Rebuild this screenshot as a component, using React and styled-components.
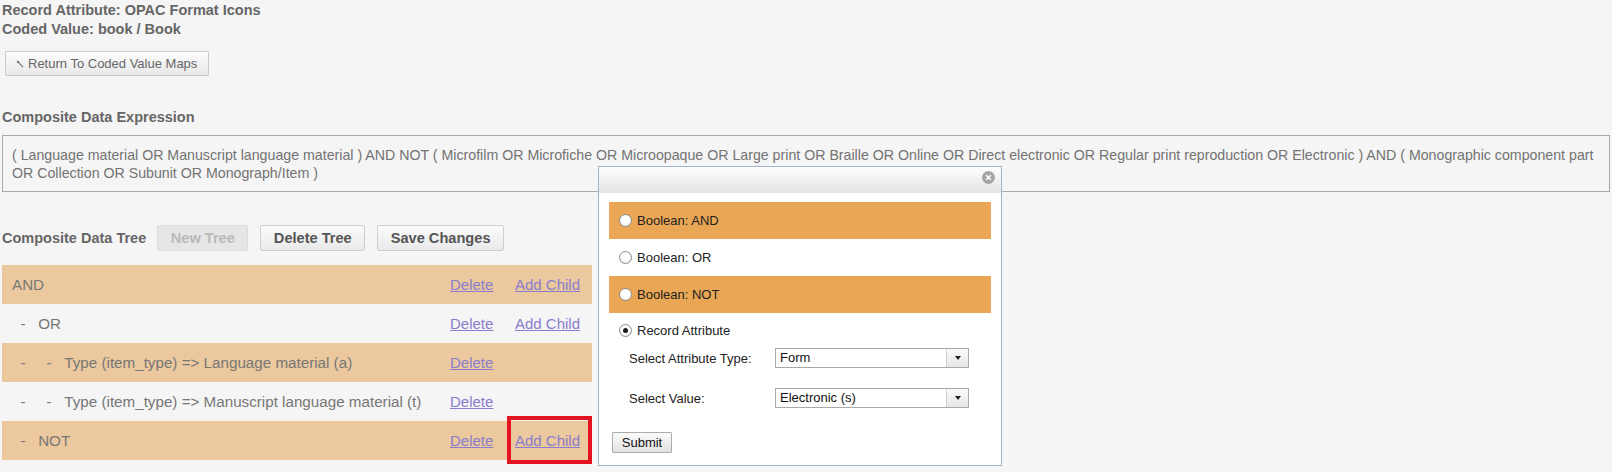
import React from "react";
import styled, { createGlobalStyle } from "styled-components";

const GlobalStyle = createGlobalStyle`
  html, body { margin: 0; padding: 0; background: #f5f5f5; }
  body { font-family: "Liberation Sans", Arial, sans-serif; }
  * { box-sizing: border-box; }
`;

const Page = styled.div`
  position: relative;
  width: 1612px;
  height: 472px;
  padding: 1px 2px 0;
  overflow: hidden;
`;

const Title = styled.div`
  font-weight: bold;
  font-size: 14.5px;
  line-height: 19px;
  color: #666;
`;

const ReturnButton = styled.button`
  display: inline-flex;
  align-items: center;
  gap: 4px;
  margin: 12px 0 0 3px;
  height: 25px;
  padding: 0 11px 0 10px;
  border: 1px solid #cacaca;
  border-radius: 1px;
  background: linear-gradient(#fdfdfd, #e8e8e8);
  color: #666;
  font: 13px "Liberation Sans", Arial, sans-serif;
`;

const SectionTitle = styled(Title)`
  margin-top: 32px;
`;

const ExpressionBox = styled.div`
  margin-top: 8px;
  border: 1px solid #a9a9a9;
  padding: 10px 9px 9px;
  font-size: 14.2px;
  line-height: 18px;
  color: #737373;
`;

const TreeToolbar = styled.div`
  display: flex;
  align-items: center;
  height: 26px;
  margin-top: 33px;
`;

const ToolbarTitle = styled(Title)`
  margin-right: 11px;
`;

const ToolButton = styled.button`
  height: 26px;
  margin-right: 12px;
  padding: 0 12.5px;
  border: 1px solid ${(p) => (p.disabled ? "#dcdcdc" : "#cfcfcf")};
  border-radius: 2px;
  background: ${(p) =>
    p.disabled ? "#e6e6e6" : "linear-gradient(#fbfbfb, #e9e9e9)"};
  color: ${(p) => (p.disabled ? "#b9b9b9" : "#555")};
  font: bold 14.6px "Liberation Sans", Arial, sans-serif;
`;

const Tree = styled.div`
  margin-top: 14px;
  width: 590px;
`;

const TreeRow = styled.div`
  display: grid;
  grid-template-columns: 1fr 65px 67px;
  height: 39px;
  padding: 0 10px;
  background: ${(p) => (p.$tone === "orange" ? "#ebc89d" : "transparent")};
  font-size: 15.2px;
  color: #777;
`;

const NodeLabel = styled.span`
  display: flex;
  align-items: center;
  white-space: pre;
`;

const LinkCell = styled.span`
  position: relative;
  display: flex;
  align-items: center;
  font-size: 15px;
`;

const TreeLink = styled.a`
  color: #8a7dcc;
  text-decoration: underline;
  cursor: pointer;
`;

const Highlight = styled.span`
  position: absolute;
  left: -8px;
  right: -10px;
  top: -5px;
  bottom: -4px;
  border: 4px solid #e3141f;
  pointer-events: none;
`;

const Dialog = styled.div`
  position: absolute;
  left: 598px;
  top: 166px;
  width: 404px;
  height: 300px;
  background: #fff;
  border: 1px solid #a3b4c4;
  font-size: 13px;
  color: #222;
`;

const DialogHeader = styled.div`
  display: flex;
  justify-content: flex-end;
  align-items: flex-start;
  height: 26px;
  padding: 4px 6px 0 0;
  background: linear-gradient(#fefefe, #e3e3e3);
`;

const DialogBody = styled.div`
  padding: 9px 10px 0;
`;

const OptionRow = styled.label`
  display: flex;
  align-items: center;
  height: ${(p) => (p.$tall ? "34px" : "37px")};
  padding-left: 10px;
  background: ${(p) => (p.$tone === "orange" ? "#e9a654" : "transparent")};
`;

const Radio = styled.input.attrs({ type: "radio" })`
  appearance: none;
  width: 13px;
  height: 13px;
  margin: 0 5px 0 0;
  border: 1px solid #8c8c8c;
  border-radius: 50%;
  background: radial-gradient(circle at 50% 40%, #ffffff 40%, #e4e4e4 100%);
  display: grid;
  place-items: center;
  &:checked::after {
    content: "";
    width: 5px;
    height: 5px;
    border-radius: 50%;
    background: #1c1c1c;
  }
`;

const FieldRow = styled.div`
  display: flex;
  align-items: center;
  height: 20px;
  margin-top: ${(p) => p.$gap}px;
  padding-left: 20px;
`;

const FieldLabel = styled.span`
  width: 146px;
`;

const SelectField = styled.div`
  display: flex;
  width: 194px;
  height: 20px;
  border: 1px solid #a9a9a9;
  background: #fff;
`;

const SelectValue = styled.span`
  flex: 1;
  padding-left: 4px;
  line-height: 18px;
  color: #111;
`;

const SelectArrow = styled.span`
  width: 22px;
  display: grid;
  place-items: center;
  border-left: 1px solid #cfcfcf;
  background: linear-gradient(#fafafa, #e6e6e6);
  &::after {
    content: "";
    border-left: 3.5px solid transparent;
    border-right: 3.5px solid transparent;
    border-top: 4px solid #222;
  }
`;

const SubmitButton = styled.button`
  margin: 24px 0 0 3px;
  width: 60px;
  height: 21px;
  padding: 0;
  border: 1px solid #adadad;
  border-radius: 1px;
  background: linear-gradient(#fbfbfb, #e2e2e2);
  color: #111;
  font: 13px "Liberation Sans", Arial, sans-serif;
`;

const ReturnIcon = () => (
  <svg width="8" height="8" viewBox="0 0 8 8">
    <path d="M1.2 1.2 L7 7" stroke="#777" strokeWidth="1.1" fill="none" />
    <path d="M0.8 0.8 L3.6 1.2 L1.2 3.6 Z" fill="#777" />
  </svg>
);

const CloseIcon = () => (
  <svg width="13" height="13" viewBox="0 0 13 13">
    <circle cx="6.5" cy="6.5" r="6.5" fill="#a6a6a6" />
    <path d="M4.2 4.2 L8.8 8.8 M8.8 4.2 L4.2 8.8" stroke="#fff" strokeWidth="1.6" />
  </svg>
);

const treeRows = [
  { depth: 0, label: "AND", tone: "orange", add: true },
  { depth: 1, label: "OR", tone: "plain", add: true },
  { depth: 2, label: "Type (item_type) => Language material (a)", tone: "orange" },
  { depth: 2, label: "Type (item_type) => Manuscript language material (t)", tone: "plain" },
  { depth: 1, label: "NOT", tone: "orange", add: true, highlight: true },
];

const prefix = (d) => "\u00a0\u00a0-\u00a0\u00a0\u00a0".repeat(d);

const booleanOptions = [
  { label: "Boolean: AND", tone: "orange" },
  { label: "Boolean: OR", tone: "plain" },
  { label: "Boolean: NOT", tone: "orange" },
];

export default function App() {
  return (
    <>
      <GlobalStyle />
      <Page>
        <Title>Record Attribute: OPAC Format Icons</Title>
        <Title>Coded Value: book / Book</Title>
        <ReturnButton>
          <ReturnIcon />
          Return To Coded Value Maps
        </ReturnButton>

        <SectionTitle>Composite Data Expression</SectionTitle>
        <ExpressionBox>
          ( Language material OR Manuscript language material ) AND NOT ( Microfilm OR
          Microfiche OR Microopaque OR Large print OR Braille OR Online OR Direct electronic
          OR Regular print reproduction OR Electronic ) AND ( Monographic component part OR
          Collection OR Subunit OR Monograph/Item )
        </ExpressionBox>

        <TreeToolbar>
          <ToolbarTitle>Composite Data Tree</ToolbarTitle>
          <ToolButton disabled>New Tree</ToolButton>
          <ToolButton>Delete Tree</ToolButton>
          <ToolButton>Save Changes</ToolButton>
        </TreeToolbar>

        <Tree>
          {treeRows.map((r, i) => (
            <TreeRow key={i} $tone={r.tone}>
              <NodeLabel>
                {prefix(r.depth)}
                {r.label}
              </NodeLabel>
              <LinkCell>
                <TreeLink>Delete</TreeLink>
              </LinkCell>
              <LinkCell>
                {r.add && <TreeLink>Add Child</TreeLink>}
                {r.highlight && <Highlight />}
              </LinkCell>
            </TreeRow>
          ))}
        </Tree>

        <Dialog>
          <DialogHeader>
            <CloseIcon />
          </DialogHeader>
          <DialogBody>
            {booleanOptions.map((o) => (
              <OptionRow key={o.label} $tone={o.tone}>
                <Radio name="node" />
                {o.label}
              </OptionRow>
            ))}
            <OptionRow $tall>
              <Radio name="node" defaultChecked />
              Record Attribute
            </OptionRow>
            <FieldRow $gap={1}>
              <FieldLabel>Select Attribute Type:</FieldLabel>
              <SelectField>
                <SelectValue>Form</SelectValue>
                <SelectArrow />
              </SelectField>
            </FieldRow>
            <FieldRow $gap={20}>
              <FieldLabel>Select Value:</FieldLabel>
              <SelectField>
                <SelectValue>Electronic (s)</SelectValue>
                <SelectArrow />
              </SelectField>
            </FieldRow>
            <SubmitButton>Submit</SubmitButton>
          </DialogBody>
        </Dialog>
      </Page>
    </>
  );
}
